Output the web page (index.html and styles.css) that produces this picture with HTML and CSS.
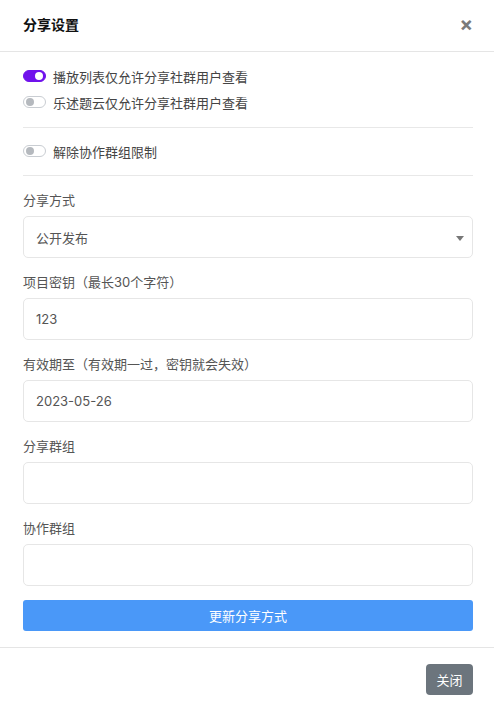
FILE: index.html
```html
<!DOCTYPE html>
<html>
	<head>
		<meta charset="utf-8" />
		<title>分享设置</title>
		<link rel="stylesheet" href="styles.css">
	</head>
	<body>
		<div class="modal">
			<header class="modal-header">
				<h5 class="modal-title">分享设置</h5>
				<span class="close">&times;</span>
			</header>
			<section class="modal-body">
				<label class="switch-row">
					<span class="switch on"></span>
					<span>播放列表仅允许分享社群用户查看</span>
				</label>
				<label class="switch-row">
					<span class="switch"></span>
					<span>乐述题云仅允许分享社群用户查看</span>
				</label>
				<hr class="divider">
				<label class="switch-row">
					<span class="switch"></span>
					<span>解除协作群组限制</span>
				</label>
				<hr class="divider last">

				<div class="field">
					<div class="field-label">分享方式</div>
					<div class="input select">
						<span>公开发布</span>
						<span class="caret"></span>
					</div>
				</div>
				<div class="field">
					<div class="field-label">项目密钥（最长30个字符）</div>
					<div class="input">123</div>
				</div>
				<div class="field">
					<div class="field-label">有效期至（有效期一过，密钥就会失效）</div>
					<div class="input">2023-05-26</div>
				</div>
				<div class="field">
					<div class="field-label">分享群组</div>
					<div class="input"></div>
				</div>
				<div class="field">
					<div class="field-label">协作群组</div>
					<div class="input"></div>
				</div>
				<button class="btn btn-primary">更新分享方式</button>
			</section>
			<footer class="modal-footer">
				<button class="btn btn-secondary">关闭</button>
			</footer>
		</div>
	</body>
</html>
```

FILE: styles.css
```css
* {
	box-sizing: border-box;
}

body {
	margin: 0;
	background: #fff;
	font-family: "Inter", "Noto Sans CJK SC", sans-serif;
	font-size: 13px;
	color: #333;
}

.modal {
	width: 494px;
}

.modal-header {
	height: 52px;
	padding: 0 23px;
	display: flex;
	align-items: center;
	justify-content: space-between;
	border-bottom: 1px solid #e5e5e5;
}

.modal-title {
	margin: 0 0 4px;
	font-size: 14px;
	font-weight: 700;
	color: #111;
}

.close {
	font-size: 20px;
	font-weight: 700;
	color: #7a7a7a;
	line-height: 1;
	margin: 0 -2px 4px 0;
}

.modal-body {
	padding: 14px 21px 16px 23px;
}

.switch-row {
	display: flex;
	align-items: center;
	gap: 7px;
	height: 20px;
	color: #444;
}

.switch-row + .switch-row {
	margin-top: 6px;
}

.switch {
	width: 23px;
	height: 12px;
	border-radius: 6px;
	border: 1px solid #c9cdd2;
	background: #fff;
	position: relative;
}

.switch::after {
	content: "";
	position: absolute;
	left: 2px;
	top: 1px;
	width: 8px;
	height: 8px;
	border-radius: 50%;
	background: #b5b9be;
}

.switch.on {
	background: #7012ec;
	border-color: #7012ec;
}

.switch.on::after {
	left: auto;
	right: 2px;
	background: #fff;
}

.divider {
	border: 0;
	border-top: 1px solid #e8e8e8;
	margin: 15px 0 13px;
}

.divider.last {
	margin: 14px 0 12px;
}

.field {
	margin-bottom: 12px;
}

.field-label {
	line-height: 20px;
	padding-top: 2px;
	margin-bottom: 6px;
	color: #555;
}

.input {
	height: 42px;
	border: 1px solid #e6e6e6;
	border-radius: 5px;
	padding: 0 12px;
	display: flex;
	align-items: center;
	color: #555;
}

.select {
	justify-content: space-between;
}

.caret {
	width: 0;
	height: 0;
	border-left: 4px solid transparent;
	border-right: 4px solid transparent;
	border-top: 5px solid #777;
	margin: 2px -4px 0 0;
}

.btn {
	font-family: inherit;
	font-size: 13px;
	color: #fff;
	border: 0;
	border-radius: 3px;
}

.btn-primary {
	display: block;
	width: 100%;
	height: 31px;
	margin-top: 14px;
	background: #4a98f8;
}

.modal-footer {
	border-top: 1px solid #e5e5e5;
	padding: 16px 21px 16px 23px;
	display: flex;
	justify-content: flex-end;
}

.btn-secondary {
	width: 47px;
	height: 31px;
	background: #6c757d;
	border-radius: 4px;
}
```
